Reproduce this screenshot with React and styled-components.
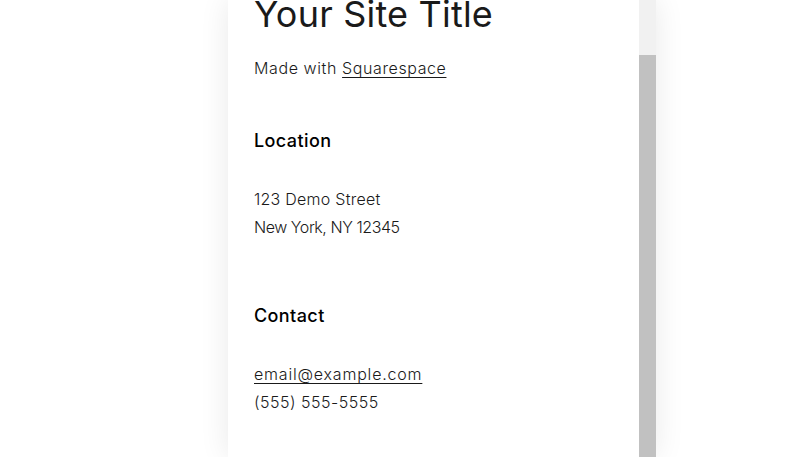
import React from "react";
import styled, { createGlobalStyle } from "styled-components";

const GlobalStyle = createGlobalStyle`
  html, body {
    margin: 0;
    padding: 0;
    background: #ffffff;
    height: 100%;
    overflow: hidden;
  }
  body {
    font-family: Inter, "Noto Sans", sans-serif;
    color: #1a1a1a;
  }
`;

const Page = styled.div`
  height: 457px;
  display: flex;
  padding-left: 228px;
`;

const Panel = styled.div`
  width: 428px;
  height: 100%;
  display: flex;
  background: #ffffff;
  box-shadow: 0 0 28px rgba(0, 0, 0, 0.09);
`;

const Content = styled.div`
  flex: 1;
  padding: 0 26px;
  overflow: hidden;
`;

const Track = styled.div`
  width: 17px;
  background: #f1f1f1;
  display: flex;
  justify-content: center;
  padding-top: ${(p) => p.offset}px;
  box-sizing: border-box;
`;

const Thumb = styled.div`
  width: 13px;
  flex: 1;
  background: #c1c1c1;
`;

const Title = styled.h1`
  margin: -10px 0 0;
  font-size: 36px;
  font-weight: 400;
  line-height: 48px;
  letter-spacing: 0.2px;
  color: #1a1a1a;
`;

const Text = styled.p`
  margin: 0;
  font-size: 16px;
  font-weight: 300;
  line-height: 28px;
  letter-spacing: ${(p) => p.tracking ?? 0.5}px;
  color: #1a1a1a;
`;

const Tagline = styled(Text)`
  margin-top: 16px;
`;

const Link = styled.a`
  color: #1a1a1a;
  text-decoration: underline;
  text-underline-offset: 3px;
  text-decoration-thickness: 1px;
`;

const Section = styled.section`
  margin-top: ${(p) => p.gap}px;
`;

const Heading = styled.h2`
  margin: 0 0 30px;
  font-size: 18px;
  font-weight: 500;
  line-height: 28px;
  letter-spacing: 0.4px;
  color: #000000;
`;

const App = () => {
  return (
    <>
      <GlobalStyle />
      <Page>
        <Panel>
          <Content>
            <Title>Your Site Title</Title>
            <Tagline tracking={0.6}>
              Made with <Link href="#">Squarespace</Link>
            </Tagline>

            <Section gap={45}>
              <Heading>Location</Heading>
              <Text tracking={0.25}>123 Demo Street</Text>
              <Text tracking={-0.45}>New York, NY 12345</Text>
            </Section>

            <Section gap={61}>
              <Heading>Contact</Heading>
              <Text tracking={0.8}>
                <Link href="#">email@example.com</Link>
              </Text>
              <Text>(555) 555-5555</Text>
            </Section>
          </Content>
          <Track offset={55}>
            <Thumb />
          </Track>
        </Panel>
      </Page>
    </>
  );
};

export default App;
